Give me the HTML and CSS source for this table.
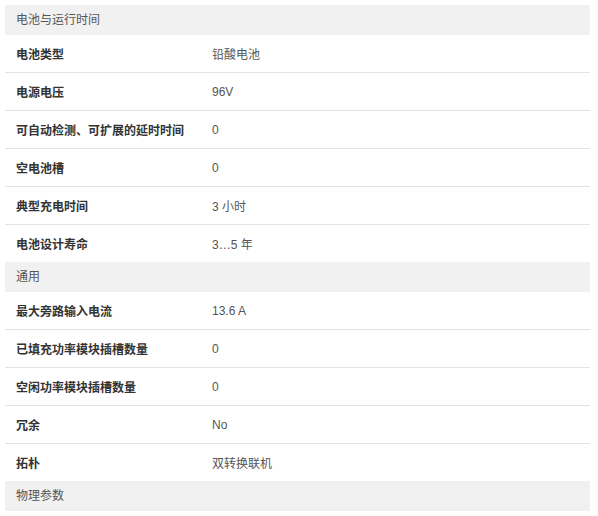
FILE: index.html
```html
<!DOCTYPE html>
<html lang="zh-CN">
<head>
<meta charset="utf-8">
<link rel="stylesheet" href="styles.css">
</head>
<body>
<div class="specs">
  <div class="section">电池与运行时间</div>
  <div class="row"><div class="label">电池类型</div><div class="value">铅酸电池</div></div>
  <div class="row"><div class="label">电源电压</div><div class="value">96V</div></div>
  <div class="row"><div class="label">可自动检测、可扩展的延时时间</div><div class="value">0</div></div>
  <div class="row"><div class="label">空电池槽</div><div class="value">0</div></div>
  <div class="row"><div class="label">典型充电时间</div><div class="value">3 小时</div></div>
  <div class="row last"><div class="label">电池设计寿命</div><div class="value">3…5 年</div></div>
  <div class="section">通用</div>
  <div class="row"><div class="label">最大旁路输入电流</div><div class="value">13.6 A</div></div>
  <div class="row"><div class="label">已填充功率模块插槽数量</div><div class="value">0</div></div>
  <div class="row"><div class="label">空闲功率模块插槽数量</div><div class="value">0</div></div>
  <div class="row"><div class="label">冗余</div><div class="value">No</div></div>
  <div class="row last"><div class="label">拓朴</div><div class="value">双转换联机</div></div>
  <div class="section">物理参数</div>
</div>
</body>
</html>
```

FILE: styles.css
```css
html, body {
  margin: 0;
  padding: 0;
  background: #ffffff;
}
body {
  padding: 5px;
  font-family: "Liberation Sans", Arial, "Noto Sans CJK SC", sans-serif;
  font-size: 12px;
  color: #333;
}
.specs {
  width: 585px;
}
.section {
  height: 30px;
  line-height: 30px;
  background: #f1f1f1;
  padding-left: 11px;
  color: #555;
}
.row {
  display: grid;
  grid-template-columns: 196px 1fr;
  height: 37px;
  border-bottom: 1px solid #e3e3e3;
  align-items: center;
}
.row.last {
  border-bottom: none;
}
.label {
  padding-left: 11px;
  font-weight: bold;
  color: #333;
}
.value {
  padding-left: 11px;
  color: #555;
}
```
